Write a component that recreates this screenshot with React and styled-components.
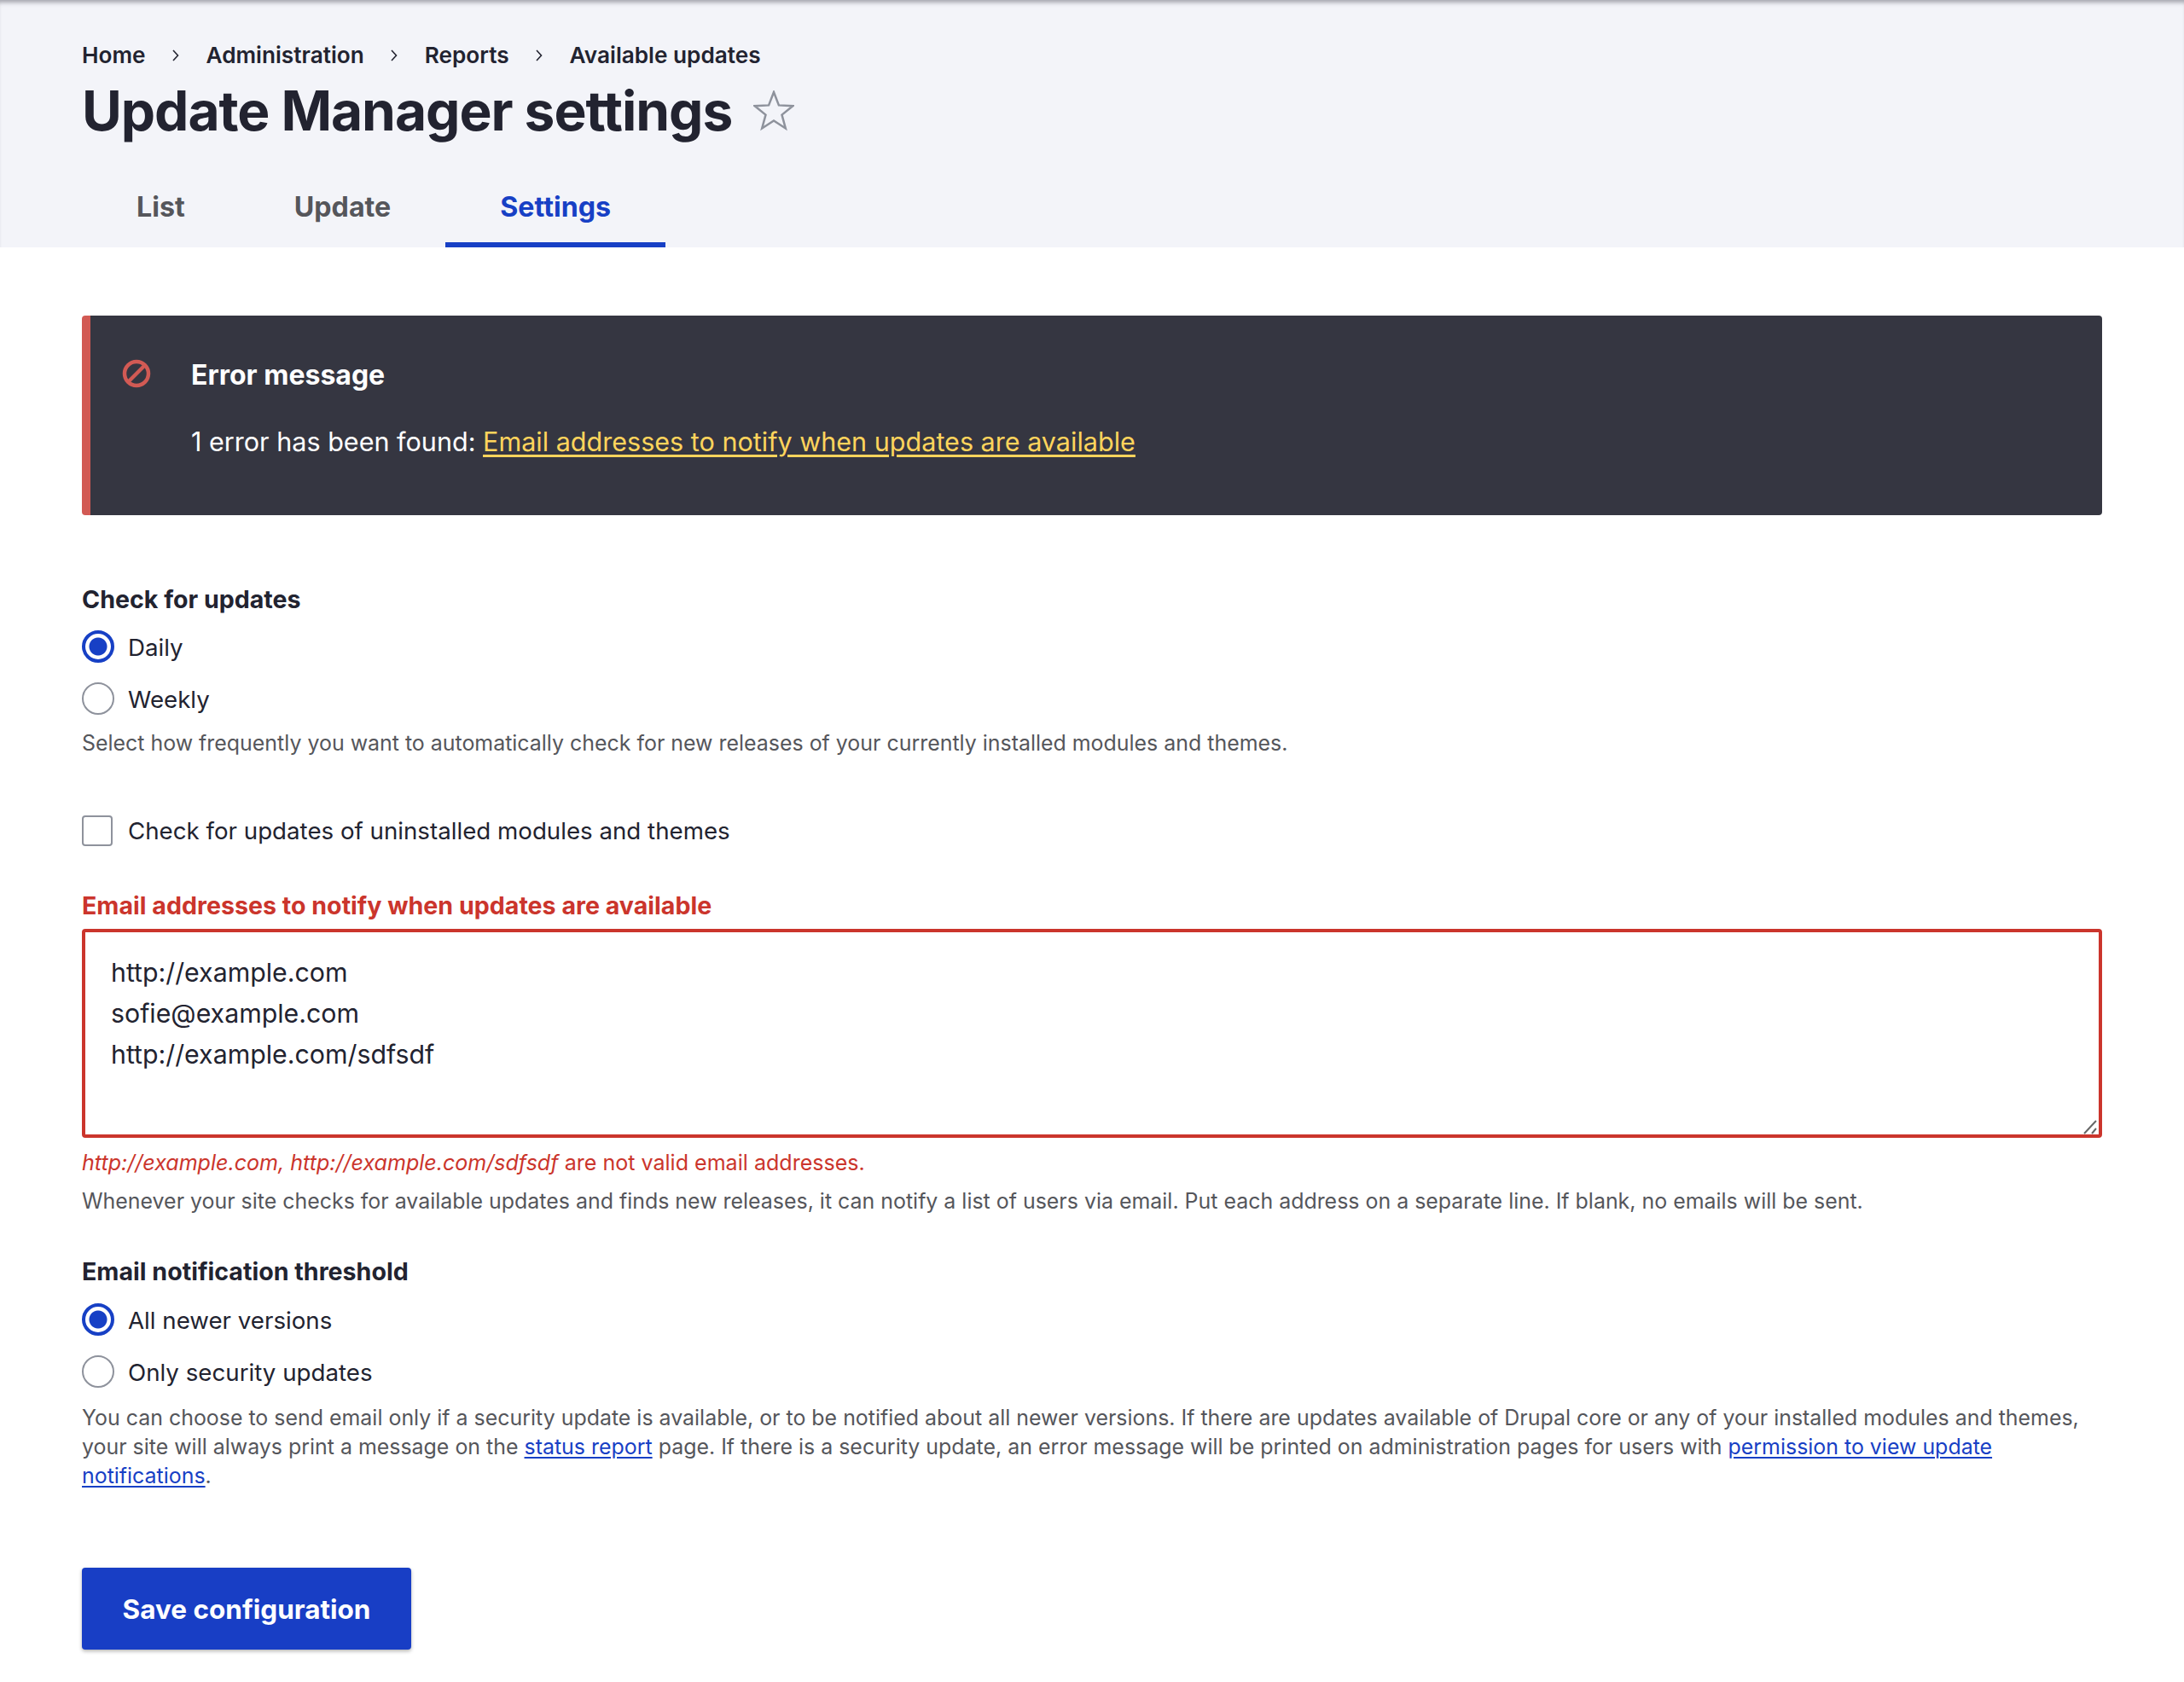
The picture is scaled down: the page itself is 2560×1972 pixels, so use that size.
import React from 'react';
import styled, { createGlobalStyle } from 'styled-components';

const GlobalStyle = createGlobalStyle`
  html, body {
    margin: 0;
    padding: 0;
    background: #fff;
    font-family: Inter, "Liberation Sans", sans-serif;
    color: #222330;
  }
  * { box-sizing: border-box; }
`;

const App = () => (
  <Page>
    <GlobalStyle />
    <Header>
      <Breadcrumb>
        {['Home', 'Administration', 'Reports', 'Available updates'].map((item, i) => (
          <React.Fragment key={item}>
            {i > 0 && (
              <Chevron viewBox="0 0 10 16">
                <path d="M2 2l5.5 6L2 14" fill="none" stroke="#222330" strokeWidth="1.6" />
              </Chevron>
            )}
            <Crumb>{item}</Crumb>
          </React.Fragment>
        ))}
      </Breadcrumb>
      <TitleRow>
        <Title>Update Manager settings</Title>
        <svg width="48" height="48" viewBox="0 0 48 48">
          <polygon
            points="24,2 29.900,17.400 46.300,18.200 33.500,28.600 37.800,44.500 24,35.500 10.200,44.500 14.500,28.600 1.700,18.200 18.100,17.400"
            fill="none"
            stroke="#8e929c"
            strokeWidth="2.500"
          />
        </svg>
      </TitleRow>
      <Tabs>
        <Tab>List</Tab>
        <Tab>Update</Tab>
        <Tab $active>Settings</Tab>
      </Tabs>
    </Header>

    <Main>
      <Message>
        <MessageIcon viewBox="0 0 36 36">
          <circle cx="18" cy="18" r="14" fill="none" stroke="#d25a54" strokeWidth="4.500" />
          <path d="M8.500 27.500l19-19" stroke="#d25a54" strokeWidth="4.500" />
        </MessageIcon>
        <div>
          <MessageTitle>Error message</MessageTitle>
          <MessageText>
            1 error has been found: <MessageLink href="#">Email addresses to notify when updates are available</MessageLink>
          </MessageText>
        </div>
      </Message>

      <Fieldset $top="81px">
        <FieldLabel>Check for updates</FieldLabel>
        <Option><Radio $checked />Daily</Option>
        <Option><Radio />Weekly</Option>
        <Description>Select how frequently you want to automatically check for new releases of your currently installed modules and themes.</Description>
      </Fieldset>

      <CheckRow><Checkbox />Check for updates of uninstalled modules and themes</CheckRow>

      <Fieldset $top="52px">
        <FieldLabel $error>Email addresses to notify when updates are available</FieldLabel>
        <EmailWrap>
          <EmailBox
            readOnly
            rows={4}
            defaultValue={'http://example.com\nsofie@example.com\nhttp://example.com/sdfsdf'}
          />
          <ResizeHandle viewBox="0 0 20 20">
            <path d="M3 19L17 4M12 19l5-6" fill="none" stroke="#666" strokeWidth="2" />
          </ResizeHandle>
        </EmailWrap>
        <FieldError><em>http://example.com, http://example.com/sdfsdf</em> are not valid email addresses.</FieldError>
        <Description $top="11px">Whenever your site checks for available updates and finds new releases, it can notify a list of users via email. Put each address on a separate line. If blank, no emails will be sent.</Description>
      </Fieldset>

      <Fieldset $top="48px">
        <FieldLabel>Email notification threshold</FieldLabel>
        <Option $first="21px"><Radio $checked />All newer versions</Option>
        <Option><Radio />Only security updates</Option>
        <Description $top="18px">
          You can choose to send email only if a security update is available, or to be notified about all newer versions. If there are updates available of Drupal core or any of your installed modules and themes, your site will always print a message on the <DescLink href="#">status report</DescLink> page. If there is a security update, an error message will be printed on administration pages for users with <DescLink href="#">permission to view update notifications</DescLink>.
        </Description>
      </Fieldset>

      <SaveButton>Save configuration</SaveButton>
    </Main>
  </Page>
);

export default App;

// ---- styled components ----

const Page = styled.div`
  width: 2560px;
  height: 1972px;
  overflow: hidden;
`;

const Header = styled.header`
  height: 290px;
  padding: 46px 96px 0;
  background: #f3f4f9;
  box-shadow: inset 0 6px 5px -3px rgba(70, 72, 85, 0.45);
`;

const Breadcrumb = styled.nav`
  display: flex;
  align-items: center;
  height: 38px;
  font-size: 26.2px;
  font-weight: 600;
  color: #222330;
`;

const Crumb = styled.span`
  line-height: 38px;
`;

const Chevron = styled.svg`
  width: 10px;
  height: 16px;
  margin: 0 30.5px;
`;

const TitleRow = styled.div`
  display: flex;
  align-items: center;
  gap: 25px;
  height: 74px;
  margin-top: 9px;
`;

const Title = styled.h1`
  margin: 0;
  font-size: 64px;
  line-height: 74px;
  font-weight: 700;
  letter-spacing: -1.05px;
  color: #222330;
`;

const Tabs = styled.div`
  display: flex;
  margin-top: 29px;
`;

const Tab = styled.div`
  height: 94px;
  padding: 0 64px;
  line-height: 94px;
  font-size: 32.2px;
  font-weight: 700;
  color: ${({ $active }) => ($active ? '#1740c5' : '#55565b')};
  border-bottom: 6px solid ${({ $active }) => ($active ? '#1740c5' : 'transparent')};
`;

const Main = styled.main`
  padding: 80px 96px 0;
`;

const Message = styled.div`
  display: flex;
  height: 234px;
  padding: 50px 32px 0 36px;
  gap: 46px;
  background: #353641;
  border-left: 10px solid #d25a54;
  border-radius: 4px;
  color: #fff;
`;

const MessageIcon = styled.svg`
  flex: none;
  width: 36px;
  height: 36px;
`;

const MessageTitle = styled.div`
  font-size: 32px;
  line-height: 40px;
  font-weight: 700;
`;

const MessageText = styled.div`
  margin-top: 38px;
  font-size: 30.55px;
  line-height: 40px;
`;

const MessageLink = styled.a`
  color: #ffd45c;
  text-decoration: underline;
  text-decoration-thickness: 3px;
  text-underline-offset: 4px;
`;

const Fieldset = styled.section`
  margin-top: ${({ $top }) => $top};
`;

const FieldLabel = styled.div`
  font-size: 28.6px;
  line-height: 36px;
  font-weight: 700;
  color: ${({ $error }) => ($error ? '#cb352c' : '#222330')};
`;

const Option = styled.label`
  display: flex;
  align-items: center;
  gap: 16px;
  height: 36px;
  margin-top: ${({ $first }) => $first || '20px'};
  font-size: 27.7px;
  color: #222330;

  & + & {
    margin-top: 25px;
  }
`;

const Radio = styled.span`
  flex: none;
  width: 38px;
  height: 38px;
  margin-top: -3px;
  border-radius: 50%;
  background: ${({ $checked }) => ($checked ? 'radial-gradient(circle, #1740c5 0 10px, #fff 11px)' : '#fff')};
  border: ${({ $checked }) => ($checked ? '4px solid #1740c5' : '2px solid #8e929c')};
`;

const Description = styled.div`
  margin-top: ${({ $top }) => $top || '16px'};
  font-size: 24.93px;
  line-height: 34px;
  color: #55565b;
`;

const CheckRow = styled.label`
  display: flex;
  align-items: center;
  gap: 18px;
  height: 36px;
  margin-top: 68px;
  font-size: 27.7px;
  color: #222330;
`;

const Checkbox = styled.span`
  flex: none;
  width: 36px;
  height: 36px;
  background: #fff;
  border: 2px solid #8e929c;
  border-radius: 4px;
`;

const EmailWrap = styled.div`
  position: relative;
  margin-top: 9px;
`;

const EmailBox = styled.textarea`
  display: block;
  width: 100%;
  height: 245px;
  padding: 23px 30px;
  font-family: Inter, "Liberation Sans", sans-serif;
  font-size: 30.3px;
  line-height: 48px;
  color: #222330;
  background: #fff;
  border: 4px solid #cb352c;
  border-radius: 4px;
  outline: none;
  resize: none;
`;

const ResizeHandle = styled.svg`
  position: absolute;
  right: 4px;
  bottom: 4px;
  width: 20px;
  height: 20px;
`;

const FieldError = styled.div`
  margin-top: 12px;
  font-size: 25.07px;
  line-height: 34px;
  color: #cb352c;
`;

const DescLink = styled.a`
  color: #1740c5;
  text-decoration: underline;
  text-decoration-thickness: 2px;
  text-underline-offset: 3px;
`;

const SaveButton = styled.button`
  display: block;
  width: 386px;
  height: 96px;
  margin-top: 91px;
  padding: 0;
  font-family: Inter, "Liberation Sans", sans-serif;
  font-size: 31.5px;
  font-weight: 700;
  color: #fff;
  background: #183ec5;
  border: none;
  border-radius: 4px;
  box-shadow: 0 2px 4px rgba(0, 0, 0, 0.3);
`;
